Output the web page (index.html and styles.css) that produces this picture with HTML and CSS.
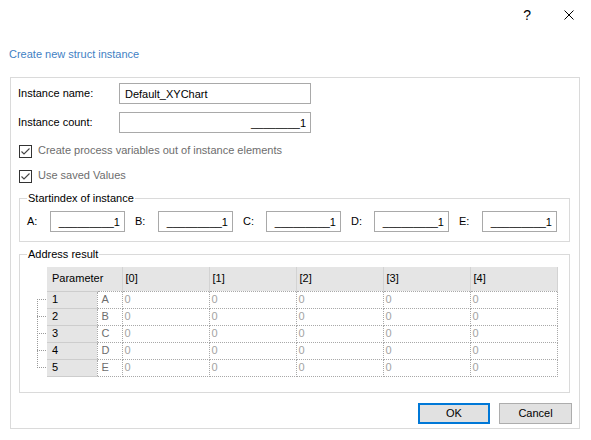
FILE: index.html
```html
<!doctype html>
<html lang="en">
    <head>
        <meta charset="UTF-8" />
        <title>Create new struct instance</title>
        <link rel="stylesheet" href="styles.css">
    </head>
    <body>
        <div class="dialog">
            <!-- Caption buttons -->
            <div class="titlebar">
                <span class="help">?</span>
                <svg class="close" width="10" height="10" viewBox="0 0 10 10">
                    <path d="M0.5 0.5 L9.5 9.5 M9.5 0.5 L0.5 9.5" stroke="#000" stroke-width="1" fill="none" />
                </svg>
            </div>

            <div class="heading">Create new struct instance</div>

            <div class="panel">
                <div class="field-row">
                    <label class="field-label">Instance name:</label>
                    <input class="textbox wide" value="Default_XYChart" />
                </div>
                <div class="field-row second">
                    <label class="field-label">Instance count:</label>
                    <input class="textbox wide masked" value="________1" />
                </div>

                <div class="check-row">
                    <span class="checkbox">
                        <svg width="13" height="13" viewBox="0 0 13 13">
                            <rect x="0.5" y="0.5" width="12" height="12" fill="#fff" stroke="#333" />
                            <path d="M2.5 6.5 L5 9 L10.5 3.5" stroke="#444" stroke-width="1.1" fill="none" />
                        </svg>
                    </span>
                    <span class="check-text">Create process variables out of instance elements</span>
                </div>
                <div class="check-row">
                    <span class="checkbox">
                        <svg width="13" height="13" viewBox="0 0 13 13">
                            <rect x="0.5" y="0.5" width="12" height="12" fill="#fff" stroke="#333" />
                            <path d="M2.5 6.5 L5 9 L10.5 3.5" stroke="#444" stroke-width="1.1" fill="none" />
                        </svg>
                    </span>
                    <span class="check-text">Use saved Values</span>
                </div>

                <fieldset class="group start-group">
                    <legend>Startindex of instance</legend>
                    <div class="index-row">
                        <div class="index-item"><label>A:</label><input class="textbox small masked" value="_________1" /></div>
                        <div class="index-item"><label>B:</label><input class="textbox small masked" value="_________1" /></div>
                        <div class="index-item"><label>C:</label><input class="textbox small masked" value="_________1" /></div>
                        <div class="index-item"><label>D:</label><input class="textbox small masked" value="_________1" /></div>
                        <div class="index-item"><label>E:</label><input class="textbox small masked" value="_________1" /></div>
                    </div>
                </fieldset>

                <fieldset class="group address-group">
                    <legend>Address result</legend>
                    <div class="grid-wrap">
                        <!-- Tree connectors next to the row headers -->
                        <svg class="tree" width="10" height="109" viewBox="0 0 10 109">
                            <g stroke="#9a9a9a" stroke-width="1" stroke-dasharray="1 1" fill="none">
                                <path d="M0.5 32 V101" />
                                <path d="M0 32.5 H10 M0 49.5 H10 M0 66.5 H10 M0 83.5 H10 M0 100.5 H10" />
                            </g>
                        </svg>
                        <table class="address-table">
                            <colgroup>
                                <col class="col-num" />
                                <col class="col-letter" />
                                <col class="col-data" />
                                <col class="col-data" />
                                <col class="col-data" />
                                <col class="col-data" />
                                <col class="col-data" />
                            </colgroup>
                            <thead>
                                <tr>
                                    <th colspan="2" class="param">Parameter</th>
                                    <th>[0]</th>
                                    <th>[1]</th>
                                    <th>[2]</th>
                                    <th>[3]</th>
                                    <th>[4]</th>
                                </tr>
                            </thead>
                            <tbody>
                                <tr>
                                    <th class="num">1</th><td class="letter">A</td>
                                    <td>0</td><td>0</td><td>0</td><td>0</td><td>0</td>
                                </tr>
                                <tr>
                                    <th class="num">2</th><td class="letter">B</td>
                                    <td>0</td><td>0</td><td>0</td><td>0</td><td>0</td>
                                </tr>
                                <tr>
                                    <th class="num">3</th><td class="letter">C</td>
                                    <td>0</td><td>0</td><td>0</td><td>0</td><td>0</td>
                                </tr>
                                <tr>
                                    <th class="num">4</th><td class="letter">D</td>
                                    <td>0</td><td>0</td><td>0</td><td>0</td><td>0</td>
                                </tr>
                                <tr>
                                    <th class="num">5</th><td class="letter">E</td>
                                    <td>0</td><td>0</td><td>0</td><td>0</td><td>0</td>
                                </tr>
                            </tbody>
                        </table>
                    </div>
                </fieldset>

                <div class="buttons">
                    <button class="btn default">OK</button>
                    <button class="btn">Cancel</button>
                </div>
            </div>
        </div>
    </body>
</html>
```

FILE: styles.css
```css
/*
 * Windows-style dialog: white client area, thin grey group borders.
 */
:root {
    --border-light: #dadada;
    --border-input: #a9a9a9;
    --header-bg: #e5e5e5;
    --text-muted: #6d6d6d;
    --text-faint: #a3a3a3;
    --accent: #3f7fc4;
    --focus: #0078d7;
}

* {
    box-sizing: border-box;
}

body {
    margin: 0;
    background-color: #fff;
    color: #000;
    font-family: "Liberation Sans", Arial, sans-serif;
    font-size: 11px;
    line-height: 13px;
}

.dialog {
    width: 591px;
    height: 440px;
}

.titlebar {
    display: flex;
    justify-content: flex-end;
    align-items: flex-start;
    height: 30px;
    padding: 7px 17px 0 0;
}
.help {
    font-size: 14px;
    line-height: 16px;
    margin-right: 33px;
}
.close {
    display: block;
    margin-top: 3px;
}

.heading {
    margin-top: 18px;
    padding-left: 9px;
    color: var(--accent);
}

.panel {
    margin: 16px 0 0 10px;
    width: 570px;
    height: 352px;
    border: 1px solid var(--border-light);
    padding: 5px 0 0 7px;
}

.field-row {
    display: flex;
    align-items: center;
    height: 21px;
}
.field-row.second {
    margin-top: 8px;
}
.field-label {
    width: 101px;
}

.textbox {
    height: 21px;
    border: 1px solid var(--border-input);
    padding: 0 4px 0 5px;
    margin: 0;
    font: inherit;
    color: #000;
    background: #fff;
    outline: none;
}
.textbox.wide {
    width: 192px;
}
.textbox.small {
    width: 75px;
}
.masked {
    text-align: right;
    padding-right: 4px;
}

.check-row {
    display: flex;
    align-items: center;
    height: 13px;
    margin-top: 12px;
    color: var(--text-muted);
}
.checkbox {
    display: block;
    width: 13px;
    height: 13px;
    margin: 0 6px 0 1px;
}
.checkbox svg {
    display: block;
}
.check-text {
    position: relative;
    top: -1px;
}

.group {
    margin: 0 9px 0 1px;
    border: 1px solid var(--border-light);
    padding: 6px 7px 9px;
    min-width: 0;
}
.group legend {
    padding: 0 1px;
    line-height: 13px;
}
.start-group {
    margin-top: 9px;
}
.address-group {
    margin-top: 6px;
    padding-bottom: 15px;
}

.index-row {
    display: flex;
    gap: 10px;
}
.index-item {
    display: flex;
    align-items: center;
}
.index-item label {
    width: 23px;
}

.grid-wrap {
    display: flex;
    align-items: flex-start;
    padding-left: 10px;
}
.tree {
    display: block;
    flex: none;
}

.address-table {
    border-collapse: collapse;
    table-layout: fixed;
    width: 510px;
}
.col-num {
    width: 50px;
}
.col-letter {
    width: 25px;
}
.col-data {
    width: 87px;
}
.address-table thead th {
    height: 24px;
    padding: 0 0 0 3px;
    background-color: var(--header-bg);
    border-right: 1px solid #d3d3d3;
    font-weight: normal;
    text-align: left;
}
.address-table thead th.param {
    padding-left: 5px;
}
.address-table tbody th,
.address-table tbody td {
    height: 17px;
    padding: 0 0 0 2px;
    font-weight: normal;
    text-align: left;
    white-space: nowrap;
}
.address-table tbody td {
    border: 1px dotted #a8a8a8;
    color: var(--text-faint);
}
.address-table th.num {
    padding-left: 5px;
    background-color: var(--header-bg);
    border-top: 1px solid #cdcdcd;
    border-bottom: 1px solid #cdcdcd;
    color: #000;
}
.address-table td.letter {
    padding-left: 4px;
    color: var(--text-muted);
}

.buttons {
    display: flex;
    justify-content: flex-end;
    gap: 9px;
    margin: 10px 7px 0 0;
}
.btn {
    width: 73px;
    height: 21px;
    padding: 0;
    margin: 0;
    border: 1px solid #adadad;
    background-color: #e1e1e1;
    font: inherit;
    color: #000;
}
.btn.default {
    width: 72px;
    border: 2px solid var(--focus);
}
```
